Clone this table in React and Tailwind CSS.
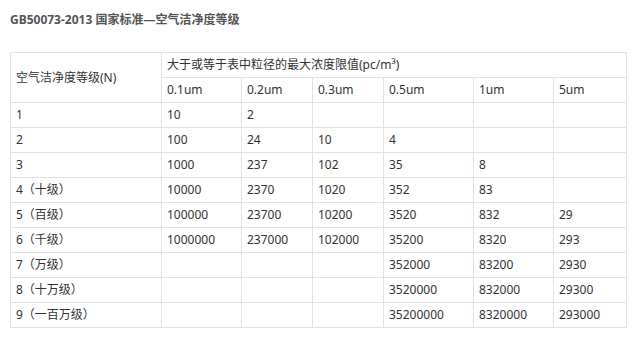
import React from "react";

const sizes = ["0.1um", "0.2um", "0.3um", "0.5um", "1um", "5um"];

const rows = [
  ["1", "10", "2", "", "", "", ""],
  ["2", "100", "24", "10", "4", "", ""],
  ["3", "1000", "237", "102", "35", "8", ""],
  ["4（十级）", "10000", "2370", "1020", "352", "83", ""],
  ["5（百级）", "100000", "23700", "10200", "3520", "832", "29"],
  ["6（千级）", "1000000", "237000", "102000", "35200", "8320", "293"],
  ["7（万级）", "", "", "", "352000", "83200", "2930"],
  ["8（十万级）", "", "", "", "3520000", "832000", "29300"],
  ["9（一百万级）", "", "", "", "35200000", "8320000", "293000"],
];

const cell = "border border-[#e2e2e2] px-[5px] h-[25px] text-left font-normal align-middle whitespace-nowrap";

const App = () => {
  return (
    <div
      className="w-[636px] h-[340px] bg-white text-[#333] text-[12px]"
      style={{ fontFamily: '"Noto Sans", "Noto Sans CJK SC", sans-serif' }}
    >
      <h1 className="pt-[10px] pl-[10px] h-[52px] text-[12px] font-bold text-[#555] leading-[20px]">
        GB50073-2013 国家标准—空气洁净度等级
      </h1>
      <table className="ml-[10px] border-collapse table-fixed w-[616px] leading-[16px]">
        <colgroup>
          <col className="w-[151px]" />
          <col className="w-[80px]" />
          <col className="w-[71px]" />
          <col className="w-[71px]" />
          <col className="w-[90px]" />
          <col className="w-[80px]" />
          <col className="w-[73px]" />
        </colgroup>
        <thead>
          <tr>
            <th rowSpan={2} className={cell}>空气洁净度等级(N)</th>
            <th colSpan={6} className={cell}>大于或等于表中粒径的最大浓度限值(pc/m³)</th>
          </tr>
          <tr>
            {sizes.map((s) => (
              <th key={s} className={cell}>{s}</th>
            ))}
          </tr>
        </thead>
        <tbody>
          {rows.map((r, i) => (
            <tr key={i}>
              {r.map((v, j) => (
                <td key={j} className={cell}>{v}</td>
              ))}
            </tr>
          ))}
        </tbody>
      </table>
    </div>
  );
};

export default App;
